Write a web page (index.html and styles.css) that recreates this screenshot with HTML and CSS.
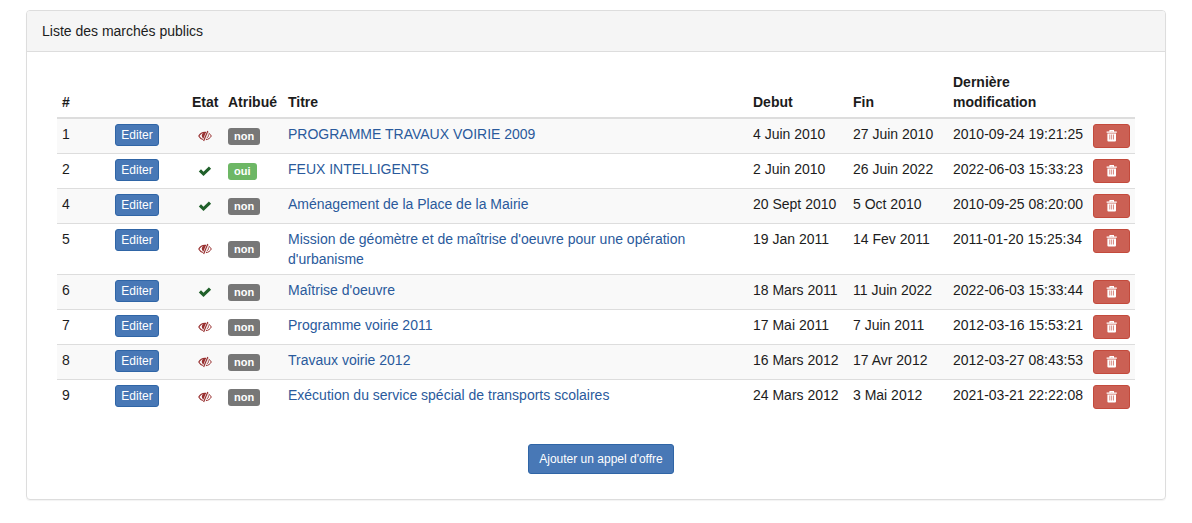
FILE: index.html
```html
<!DOCTYPE html>
<html lang="fr">
<head>
  <meta charset="UTF-8" />
  <meta name="viewport" content="width=device-width, initial-scale=1.0"/>
  <title>Liste des marchés publics</title>
  <link rel="stylesheet" href="styles.css">
</head>
<body>

<!-- Icons -->
<svg class="sprite" aria-hidden="true">
  <symbol id="icon-hidden" viewBox="0 0 14 12">
    <path d="M8 2.400C4.800 2 2.200 3.500.8 6c.9 1.700 2.300 2.900 4.100 3.500" fill="none" stroke="currentColor" stroke-width="1.100"/>
    <path d="M7.800 2.400C5.200 2.200 3.800 3.600 3.800 5.500c0 1.400.7 2.400 1.700 2.900z" fill="currentColor"/>
    <path d="M9.800 1 5.600 11" fill="none" stroke="currentColor" stroke-width="1.200"/>
    <path d="M10.600 3.100c1.200.7 2.100 1.700 2.700 2.900-1.200 2.200-3 3.400-5.400 3.700" fill="none" stroke="currentColor" stroke-width="1"/>
    <path d="M10.300 4.400c.4 1.500-.2 2.900-1.600 3.600" fill="none" stroke="currentColor" stroke-width="1"/>
  </symbol>
  <symbol id="icon-ok" viewBox="0 0 14 12">
    <path d="M.8 6.400 3 4.200 5.500 6.700 10.900 1.500 13.100 3.700 5.500 11z" fill="currentColor"/>
  </symbol>
  <symbol id="icon-trash" viewBox="0 0 12 12">
    <path d="M4 1.800V.6h3.400v1.200M.6 2.200h10.200" fill="none" stroke="currentColor" stroke-width="1.200"/>
    <path fill-rule="evenodd" d="M1.400 3.400H10V10.400q0 1-1 1H2.400q-1 0-1-1zM3.500 4.600v5h.7v-5zM5.400 4.600v5h.7v-5zM7.300 4.600v5h.7v-5z" fill="currentColor"/>
  </symbol>
</svg>

<main class="container">
  <div class="panel">
    <div class="panel-heading">Liste des marchés publics</div>
    <div class="panel-body">
      <table class="table">
        <colgroup>
          <col class="col-id">
          <col class="col-edit">
          <col class="col-state">
          <col class="col-awarded">
          <col>
          <col class="col-date">
          <col class="col-date">
          <col class="col-modified">
          <col class="col-delete">
        </colgroup>
        <thead>
          <tr>
            <th>#</th>
            <th></th>
            <th>Etat</th>
            <th>Atribué</th>
            <th>Titre</th>
            <th>Debut</th>
            <th>Fin</th>
            <th>Dernière modification</th>
            <th></th>
          </tr>
        </thead>
        <tbody>
          <tr>
            <td>1</td>
            <td><button type="button" class="btn btn-primary btn-xs">Editer</button></td>
            <td class="state"><svg class="icon icon-off" role="img" aria-label="Masqué"><use href="#icon-hidden"/></svg></td>
            <td class="awarded"><span class="label">non</span></td>
            <td><a href="#">PROGRAMME TRAVAUX VOIRIE 2009</a></td>
            <td>4 Juin 2010</td>
            <td>27 Juin 2010</td>
            <td>2010-09-24 19:21:25</td>
            <td><button type="button" class="btn btn-danger" aria-label="Supprimer"><svg class="icon-trash"><use href="#icon-trash"/></svg></button></td>
          </tr>
          <tr>
            <td>2</td>
            <td><button type="button" class="btn btn-primary btn-xs">Editer</button></td>
            <td class="state"><svg class="icon icon-on" role="img" aria-label="Publié"><use href="#icon-ok"/></svg></td>
            <td class="awarded"><span class="label label-success">oui</span></td>
            <td><a href="#">FEUX INTELLIGENTS</a></td>
            <td>2 Juin 2010</td>
            <td>26 Juin 2022</td>
            <td>2022-06-03 15:33:23</td>
            <td><button type="button" class="btn btn-danger" aria-label="Supprimer"><svg class="icon-trash"><use href="#icon-trash"/></svg></button></td>
          </tr>
          <tr>
            <td>4</td>
            <td><button type="button" class="btn btn-primary btn-xs">Editer</button></td>
            <td class="state"><svg class="icon icon-on" role="img" aria-label="Publié"><use href="#icon-ok"/></svg></td>
            <td class="awarded"><span class="label">non</span></td>
            <td><a href="#">Aménagement de la Place de la Mairie</a></td>
            <td>20 Sept 2010</td>
            <td>5 Oct 2010</td>
            <td>2010-09-25 08:20:00</td>
            <td><button type="button" class="btn btn-danger" aria-label="Supprimer"><svg class="icon-trash"><use href="#icon-trash"/></svg></button></td>
          </tr>
          <tr>
            <td>5</td>
            <td><button type="button" class="btn btn-primary btn-xs">Editer</button></td>
            <td class="state"><svg class="icon icon-off" role="img" aria-label="Masqué"><use href="#icon-hidden"/></svg></td>
            <td class="awarded"><span class="label">non</span></td>
            <td><a href="#">Mission de géomètre et de maîtrise d'oeuvre pour une opération d'urbanisme</a></td>
            <td>19 Jan 2011</td>
            <td>14 Fev 2011</td>
            <td>2011-01-20 15:25:34</td>
            <td><button type="button" class="btn btn-danger" aria-label="Supprimer"><svg class="icon-trash"><use href="#icon-trash"/></svg></button></td>
          </tr>
          <tr>
            <td>6</td>
            <td><button type="button" class="btn btn-primary btn-xs">Editer</button></td>
            <td class="state"><svg class="icon icon-on" role="img" aria-label="Publié"><use href="#icon-ok"/></svg></td>
            <td class="awarded"><span class="label">non</span></td>
            <td><a href="#">Maîtrise d'oeuvre</a></td>
            <td>18 Mars 2011</td>
            <td>11 Juin 2022</td>
            <td>2022-06-03 15:33:44</td>
            <td><button type="button" class="btn btn-danger" aria-label="Supprimer"><svg class="icon-trash"><use href="#icon-trash"/></svg></button></td>
          </tr>
          <tr>
            <td>7</td>
            <td><button type="button" class="btn btn-primary btn-xs">Editer</button></td>
            <td class="state"><svg class="icon icon-off" role="img" aria-label="Masqué"><use href="#icon-hidden"/></svg></td>
            <td class="awarded"><span class="label">non</span></td>
            <td><a href="#">Programme voirie 2011</a></td>
            <td>17 Mai 2011</td>
            <td>7 Juin 2011</td>
            <td>2012-03-16 15:53:21</td>
            <td><button type="button" class="btn btn-danger" aria-label="Supprimer"><svg class="icon-trash"><use href="#icon-trash"/></svg></button></td>
          </tr>
          <tr>
            <td>8</td>
            <td><button type="button" class="btn btn-primary btn-xs">Editer</button></td>
            <td class="state"><svg class="icon icon-off" role="img" aria-label="Masqué"><use href="#icon-hidden"/></svg></td>
            <td class="awarded"><span class="label">non</span></td>
            <td><a href="#">Travaux voirie 2012</a></td>
            <td>16 Mars 2012</td>
            <td>17 Avr 2012</td>
            <td>2012-03-27 08:43:53</td>
            <td><button type="button" class="btn btn-danger" aria-label="Supprimer"><svg class="icon-trash"><use href="#icon-trash"/></svg></button></td>
          </tr>
          <tr>
            <td>9</td>
            <td><button type="button" class="btn btn-primary btn-xs">Editer</button></td>
            <td class="state"><svg class="icon icon-off" role="img" aria-label="Masqué"><use href="#icon-hidden"/></svg></td>
            <td class="awarded"><span class="label">non</span></td>
            <td><a href="#">Exécution du service spécial de transports scolaires</a></td>
            <td>24 Mars 2012</td>
            <td>3 Mai 2012</td>
            <td>2021-03-21 22:22:08</td>
            <td><button type="button" class="btn btn-danger" aria-label="Supprimer"><svg class="icon-trash"><use href="#icon-trash"/></svg></button></td>
          </tr>
        </tbody>
      </table>

      <div class="actions">
        <button type="button" class="btn btn-primary btn-sm">Ajouter un appel d'offre</button>
      </div>
    </div>
  </div>
</main>

</body>
</html>
```
FILE: styles.css
```css
* {
  box-sizing: border-box;
}

body {
  margin: 0;
  font-family: "Liberation Sans", Arial, sans-serif;
  font-size: 14px;
  line-height: 20px;
  color: #1c1c1c;
  background-color: #fff;
}

.sprite {
  display: none;
}

.container {
  max-width: 1192px;
  margin: 0 auto;
  padding: 10px 26px;
}

.panel {
  border: 1px solid #ddd;
  border-radius: 4px;
  box-shadow: 0 1px 1px rgba(0, 0, 0, 0.05);
}

.panel-heading {
  padding: 10px 15px;
  background-color: #f5f5f5;
  border-bottom: 1px solid #ddd;
  border-radius: 3px 3px 0 0;
}

.panel-body {
  padding: 15px 30px 25px;
}

/* Table */
.table {
  width: 100%;
  table-layout: fixed;
  border-collapse: separate;
  border-spacing: 0;
}

.col-id { width: 53px; }
.col-edit { width: 77px; }
.col-state { width: 36px; }
.col-awarded { width: 60px; }
.col-date { width: 100px; }
.col-modified { width: 140px; }
.col-delete { width: 47px; }

th, td {
  padding: 5px;
  text-align: left;
  vertical-align: top;
}

th {
  vertical-align: bottom;
  border-bottom: 2px solid #ddd;
}

td {
  border-top: 1px solid #ddd;
  white-space: nowrap;
}

td:nth-child(5) {
  white-space: normal;
}

tbody tr:first-child td {
  border-top: 0;
}

tbody tr:nth-child(odd) {
  background-color: #f9f9f9;
}

.state, .awarded {
  vertical-align: middle;
}

a {
  color: #2a5a9c;
  text-decoration: none;
}

a:hover {
  text-decoration: underline;
}

/* Labels and icons */
.label {
  display: block;
  width: max-content;
  padding: 2px 6px 3px;
  font-size: 11px;
  font-weight: bold;
  line-height: 12px;
  color: #fff;
  background-color: #777;
  border-radius: 3px;
}

.label-success {
  background-color: #6db765;
}

.icon {
  display: block;
  width: 14px;
  height: 12px;
  margin: 0 auto;
}

.icon-off {
  color: #983030;
}

.icon-on {
  color: #20602a;
}

/* Buttons */
.btn {
  display: block;
  font-family: inherit;
  font-size: 12px;
  line-height: 18px;
  color: #fff;
  border: 1px solid transparent;
  border-radius: 3px;
  cursor: pointer;
}

.btn-primary {
  background-color: #4878b6;
  border-color: #2f65a6;
}

.btn-xs {
  min-width: 44px;
  padding: 1px 5px;
}

.btn-sm {
  padding: 5px 10px;
}

.btn-danger {
  width: 100%;
  padding: 5px 12px;
  background-color: #cb6054;
  border-color: #c34a3c;
}

.icon-trash {
  display: block;
  width: 12px;
  height: 12px;
  margin: 0 auto;
}

.actions {
  display: flex;
  justify-content: center;
  padding: 30px 0 0 10px;
}
```
